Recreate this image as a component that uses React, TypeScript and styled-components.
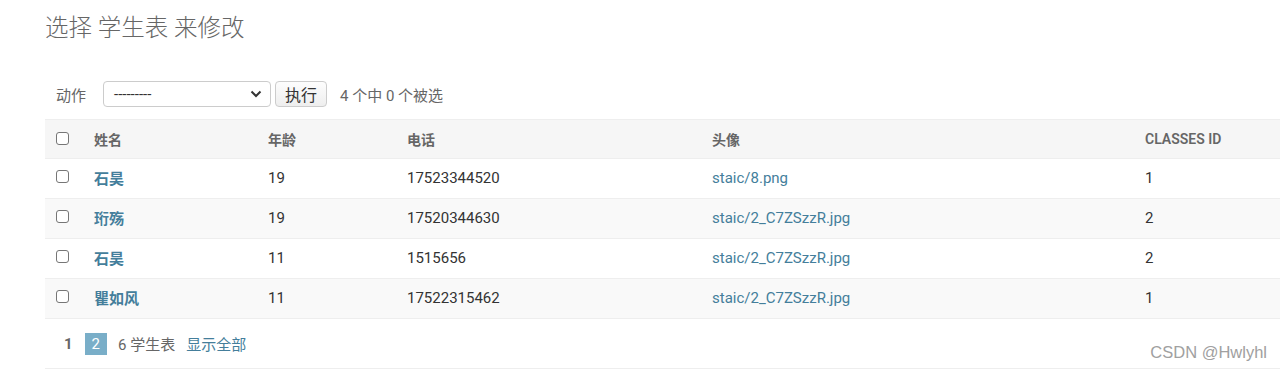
import React from "react";
import styled, { createGlobalStyle } from "styled-components";

const GlobalStyle = createGlobalStyle`
  body {
    margin: 0;
    background: #fff;
    font-family: Roboto, "Noto Sans CJK SC", "Liberation Sans", sans-serif;
    color: #333;
  }
`;

const students = [
  { name: "石昊", age: 19, phone: "17523344520", avatar: "staic/8.png", cls: 1 },
  { name: "珩殇", age: 19, phone: "17520344630", avatar: "staic/2_C7ZSzzR.jpg", cls: 2 },
  { name: "石昊", age: 11, phone: "1515656", avatar: "staic/2_C7ZSzzR.jpg", cls: 2 },
  { name: "瞿如风", age: 11, phone: "17522315462", avatar: "staic/2_C7ZSzzR.jpg", cls: 1 },
];

const App = () => {
  return (
    <Page>
      <GlobalStyle />
      <Title>选择 学生表 来修改</Title>
      <Actions>
        <ActionLabel>动作</ActionLabel>
        <SelectBox>
          <span>---------</span>
          <svg width="12" height="8" viewBox="0 0 12 8">
            <path d="M1.5 1.5 L6 6 L10.5 1.5" fill="none" stroke="#333" strokeWidth="2" />
          </svg>
        </SelectBox>
        <GoButton>执行</GoButton>
        <Counter>4 个中 0 个被选</Counter>
      </Actions>
      <Table>
        <colgroup>
          <col style={{ width: 41 }} />
          <col style={{ width: 174 }} />
          <col style={{ width: 139 }} />
          <col style={{ width: 305 }} />
          <col style={{ width: 433 }} />
          <col />
        </colgroup>
        <thead>
          <tr>
            <Th><Check /></Th>
            <Th>姓名</Th>
            <Th>年龄</Th>
            <Th>电话</Th>
            <Th>头像</Th>
            <Th>Classes id</Th>
          </tr>
        </thead>
        <tbody>
          {students.map((s, i) => (
            <Row key={i} $alt={i % 2 === 1}>
              <Td><Check /></Td>
              <Td><NameLink>{s.name}</NameLink></Td>
              <Td>{s.age}</Td>
              <Td>{s.phone}</Td>
              <Td><FileLink>{s.avatar}</FileLink></Td>
              <Td>{s.cls}</Td>
            </Row>
          ))}
        </tbody>
      </Table>
      <Paginator>
        <PageNum>1</PageNum>
        <PageNum $current>2</PageNum>
        <Total>6 学生表</Total>
        <ShowAll>显示全部</ShowAll>
      </Paginator>
      <Watermark>CSDN @Hwlyhl</Watermark>
    </Page>
  );
};

export default App;

const Page = styled.div`
  position: relative;
  width: 1280px;
  height: 371px;
  padding-left: 45px;
  box-sizing: border-box;
  overflow: hidden;
`;

const Title = styled.h1`
  margin: 0;
  padding-top: 13px;
  font-size: 23.5px;
  line-height: 30px;
  font-weight: 300;
  color: #666;
`;

const Actions = styled.div`
  display: flex;
  align-items: center;
  height: 28px;
  margin-top: 37px;
  padding-left: 11px;
`;

const ActionLabel = styled.span`
  font-size: 15px;
  color: #666;
  margin-right: 17px;
`;

const SelectBox = styled.div`
  display: flex;
  align-items: center;
  justify-content: space-between;
  width: 168px;
  height: 26px;
  box-sizing: border-box;
  padding: 0 8px 0 10px;
  border: 1px solid #ccc;
  border-radius: 4px;
  background: #fff;
  font-size: 15px;
  color: #333;
`;

const GoButton = styled.button`
  margin-left: 4px;
  width: 52px;
  height: 26px;
  border: 1px solid #ccc;
  border-radius: 4px;
  background: linear-gradient(#fdfdfd, #eee);
  font-family: inherit;
  font-size: 16px;
  color: #333;
  padding: 0;
`;

const Counter = styled.span`
  margin-left: 13px;
  font-size: 15px;
  color: #666;
`;

const Table = styled.table`
  margin-top: 11px;
  width: 1235px;
  border-collapse: collapse;
  table-layout: fixed;
  border-top: 1px solid #eee;
`;

const Th = styled.th`
  height: 38px;
  padding: 0 0 0 8px;
  text-align: left;
  background: #f6f6f6;
  font-size: 14px;
  font-weight: 600;
  color: #666;
  text-transform: uppercase;
  border-bottom: 1px solid #eee;
  vertical-align: middle;
  &:first-child {
    padding-left: 11px;
  }
`;

const Row = styled.tr<{ $alt: boolean }>`
  background: ${(p) => (p.$alt ? "#f9f9f9" : "#fff")};
`;

const Td = styled.td`
  height: 37px;
  padding: 0 0 2px 8px;
  font-size: 15px;
  color: #333;
  border-bottom: 1px solid #eee;
  vertical-align: middle;
  &:first-child {
    padding-left: 11px;
  }
`;

const Check = styled.span`
  display: block;
  width: 13px;
  height: 13px;
  margin-top: -2px;
  border: 1px solid #767676;
  border-radius: 3px;
  background: #fff;
  box-sizing: border-box;
`;

const NameLink = styled.a`
  color: #447e9b;
  font-weight: 700;
`;

const FileLink = styled.a`
  color: #447e9b;
`;

const Paginator = styled.div`
  display: flex;
  align-items: center;
  width: 1235px;
  height: 50px;
  padding-left: 19px;
  box-sizing: border-box;
  border-bottom: 1px solid #eee;
  font-size: 15px;
  color: #666;
`;

const PageNum = styled.span<{ $current?: boolean }>`
  display: inline-flex;
  align-items: center;
  justify-content: center;
  height: 22px;
  padding: 0 ${(p) => (p.$current ? "7px" : "0")};
  margin-right: ${(p) => (p.$current ? "11px" : "12px")};
  background: ${(p) => (p.$current ? "#79aec8" : "transparent")};
  color: ${(p) => (p.$current ? "#fff" : "#666")};
  font-weight: ${(p) => (p.$current ? 400 : 700)};
`;

const Total = styled.span`
  margin-right: 11px;
`;

const ShowAll = styled.a`
  color: #447e9b;
`;

const Watermark = styled.div`
  position: absolute;
  right: 13px;
  bottom: 9px;
  font-family: "Liberation Sans", sans-serif;
  font-size: 16.5px;
  color: #a0a0a0;
`;
